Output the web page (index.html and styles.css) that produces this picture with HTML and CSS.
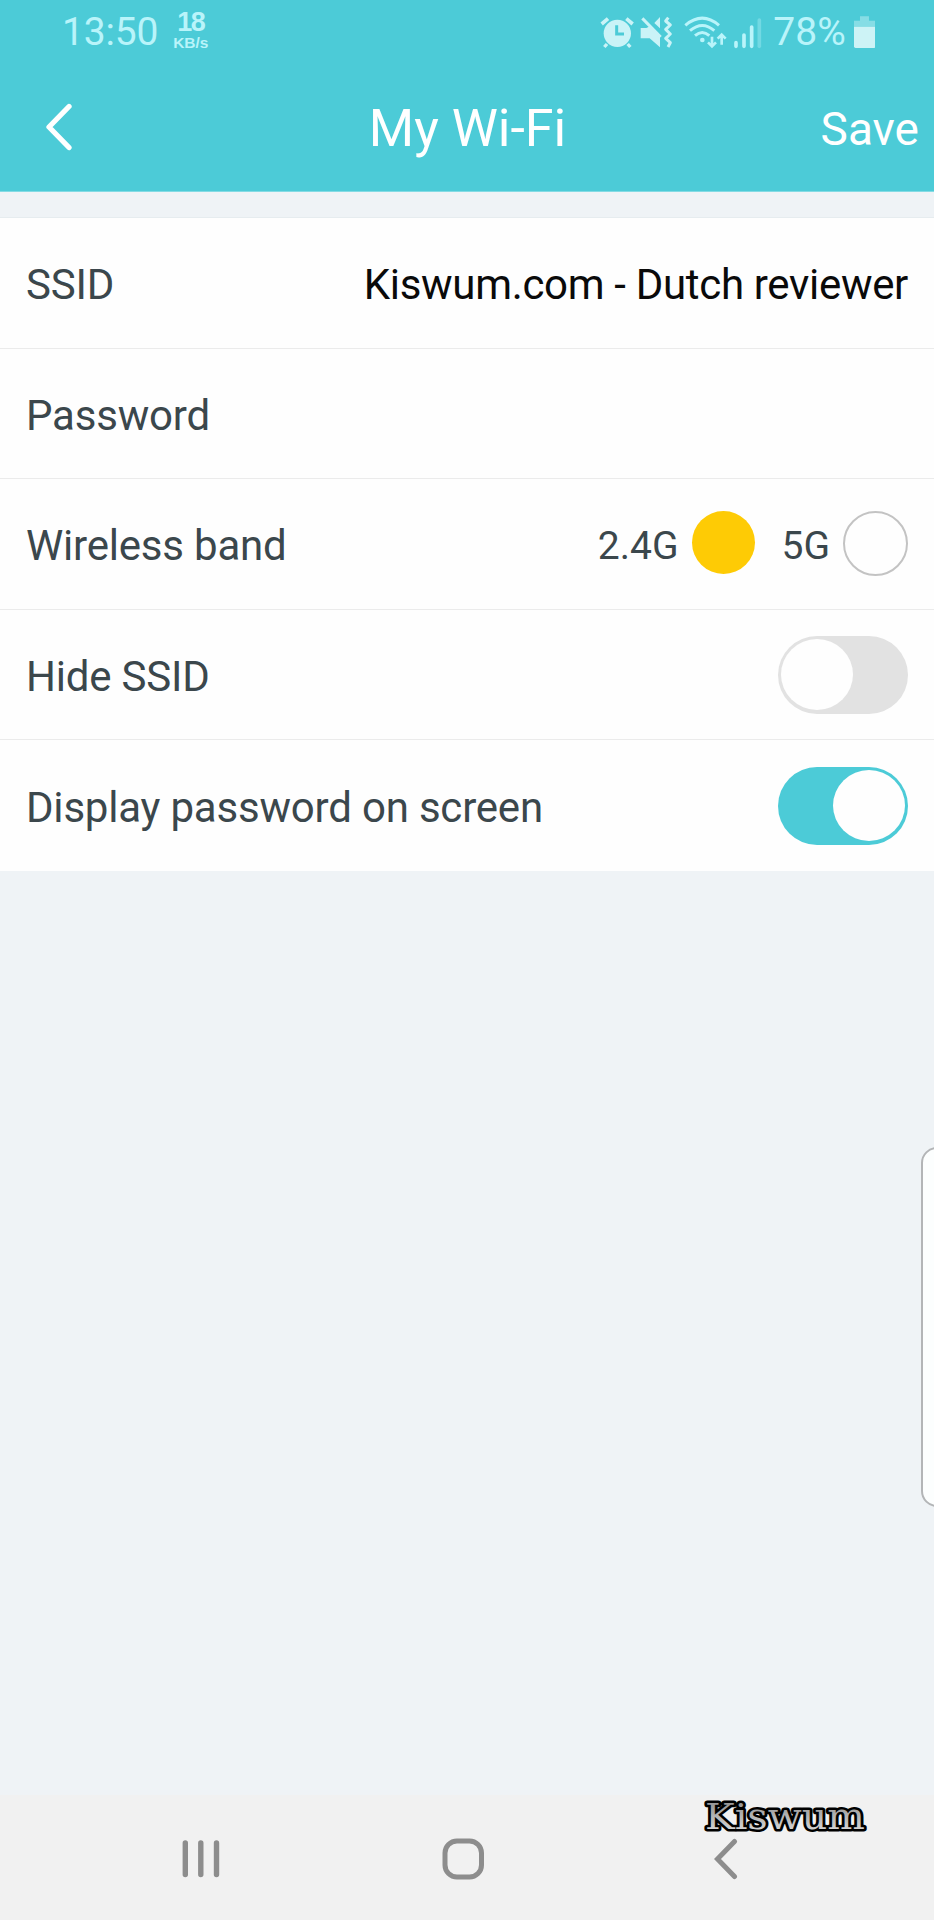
FILE: index.html
```html
<!DOCTYPE html>
<html lang="en">
<head>
<meta charset="utf-8">
<title>My Wi-Fi</title>
<link rel="stylesheet" href="styles.css">
</head>
<body>
<div class="screen">
  <header class="top">
    <div class="status">
      <span class="clock">13:50</span>
      <span class="speed"><span class="speed-num">18</span><span class="speed-unit">KB/s</span></span>
      <span class="spacer"></span>
      <svg class="status-icons" viewBox="50 40 500 105" width="166.67" height="35">
        <g fill="none" stroke="#caf3f7" stroke-width="9">
          <path d="M58 67L77 51M132 51L151 67" stroke-width="11"/>
          <path d="M74 127L66 136M136 127L144 136" stroke-width="10"/>
          <path d="M258 48L250 58L264 70L250 83L264 97L250 110L264 123L257 136" stroke-width="9" stroke-linejoin="round"/>
        </g>
        <circle cx="105" cy="95" r="41" fill="#caf3f7"/>
        <path d="M103 71V97H125" fill="none" stroke="#4ccbd7" stroke-width="9"/>
        <path d="M175 79H192L203 74L233 105V137L202 110H175Z" fill="#caf3f7"/>
        <path d="M216 64L233 46V80Z" fill="#caf3f7"/>
        <path d="M180 50L235 106" stroke="#caf3f7" stroke-width="9"/>
        <g fill="none" stroke="#b9f4fa" stroke-width="9">
          <path d="M309 71Q360 28 410 71"/>
          <path d="M323 87Q360 56 396 87"/>
          <path d="M338 102Q360 83 381 102"/>
        </g>
        <circle cx="360" cy="115" r="7" fill="#b9f4fa"/>
        <g fill="none" stroke="#b9f4fa" stroke-width="8">
          <path d="M389 105V134M377 122L389 134L401 122"/>
          <path d="M418 129V98M406 111L418 99L430 111"/>
        </g>
        <g stroke="#b9f4fa" stroke-width="11" stroke-linecap="round">
          <path d="M461 123V134M485 100V134M508 76V134"/>
          <path d="M531 55V134" opacity=".35"/>
        </g>
      </svg>
      <span class="percent">78%</span>
      <svg class="battery" viewBox="815 44 64 96" width="21.3" height="32">
        <path d="M833 45H860V58H879V76H815V58H833Z" fill="#86dde5"/>
        <path d="M815 76H879V135Q879 140 874 140H820Q815 140 815 135Z" fill="#cdf3f6"/>
      </svg>
    </div>
    <div class="titlebar">
      <svg class="back" viewBox="0 0 28 48" width="28" height="48"><path d="M24 3.500L4 24L24 44.500" fill="none" stroke="#fff" stroke-width="5.300" stroke-linecap="round" stroke-linejoin="round"/></svg>
      <h1 class="title">My Wi-Fi</h1>
      <span class="save">Save</span>
    </div>
  </header>
  <main class="settings">
    <div class="row"><span class="label">SSID</span><span class="value">Kiswum.com - Dutch reviewer</span></div>
    <div class="row"><span class="label">Password</span></div>
    <div class="row">
      <span class="label">Wireless band</span>
      <span class="bands">
        <span class="band">2.4G</span><span class="radio radio-on"></span>
        <span class="band band-5">5G</span><span class="radio"></span>
      </span>
    </div>
    <div class="row"><span class="label">Hide SSID</span><span class="toggle"><span class="knob"></span></span></div>
    <div class="row"><span class="label">Display password on screen</span><span class="toggle toggle-on"><span class="knob"></span></span></div>
  </main>
  <div class="edge-panel"></div>
  <nav class="nav">
    <svg viewBox="0 0 40 44" width="40" height="44"><path d="M5.800 5V36.500M21.300 5V36.500M37 5V36.500" transform="translate(-1.500 1)" stroke="#8d8d8d" stroke-width="5.400" stroke-linecap="round"/></svg>
    <svg class="home" viewBox="0 0 44 44" width="44" height="44"><rect x="4" y="4" width="36.500" height="36" rx="12" fill="none" stroke="#8d8d8d" stroke-width="5"/></svg>
    <svg viewBox="0 0 24 44" width="24" height="44"><path d="M20.500 4.500L3.500 22L20.500 39.500" fill="none" stroke="#8d8d8d" stroke-width="5" stroke-linecap="round"/></svg>
  </nav>
  <svg class="watermark" viewBox="0 0 170 44" width="170" height="44">
    <defs><linearGradient id="silver" x1="0" y1="0" x2="0" y2="1"><stop offset=".2" stop-color="#999"/><stop offset=".8" stop-color="#d2d2d2"/></linearGradient></defs>
    <text class="watermark-text" x="5" y="33" textLength="160" lengthAdjust="spacingAndGlyphs">Kiswum</text>
  </svg>
</div>
</body>
</html>
```

FILE: styles.css
```css
* { box-sizing: border-box; }
body { margin: 0; font-family: Roboto, sans-serif; background: #eff3f6; }
svg { display: block; flex: none; }
.screen {
  position: relative;
  width: 934px;
  height: 1920px;
  overflow: hidden;
  display: flex;
  flex-direction: column;
  background: #eff3f6;
}
.top { height: 192px; background: #4ccbd7; border-bottom: 1px solid #84dbe4; }
.status { height: 64px; display: flex; align-items: center; padding: 0 59px 0 62px; color: #b9f4fa; }
.clock { font-size: 39px; line-height: 64px; letter-spacing: -0.2px; }
.speed {
  display: flex;
  flex-direction: column;
  align-items: center;
  margin-left: 15px;
  font-family: "Liberation Sans", Arial, sans-serif;
  font-weight: bold;
}
.speed-num { font-size: 27px; line-height: 21px; letter-spacing: -1.5px; }
.speed-unit { font-size: 15.5px; line-height: 19px; }
.spacer { flex: 1; }
.percent { font-size: 39px; line-height: 64px; margin: 0 8px 0 8px; }
.titlebar {
  height: 125px;
  display: grid;
  grid-template-columns: 200px 1fr 200px;
  align-items: center;
  padding: 0 15px 0 45px;
  color: #fff;
}
.title { margin: 0 0 0 -29px; padding-top: 4px; text-align: center; font-size: 52px; font-weight: 400; }
.save { padding-top: 4px; text-align: right; font-size: 46px; }
.settings {
  height: 654px;
  margin-top: 25px;
  border-top: 1px solid #e6ecef;
  background: #fefefe;
  display: grid;
  grid-template-rows: repeat(5, 1fr);
}
.row {
  display: flex;
  align-items: center;
  justify-content: space-between;
  padding: 0 26px;
  border-bottom: 1px solid #ebebeb;
  color: #3b474c;
  font-size: 42px;
}
.row:last-child { border-bottom: 0; }
.label, .value { padding-top: 4px; white-space: nowrap; }
.label { letter-spacing: -0.2px; }
.value { color: #0a0a0a; letter-spacing: -0.32px; }
.bands { display: flex; align-items: center; }
.band { font-size: 39px; padding-top: 4px; margin-right: 13px; }
.band-5 { margin-left: 27px; }
.radio { width: 65px; height: 65px; border-radius: 50%; border: 2px solid #c3c3c3; }
.radio-on { width: 63px; height: 63px; margin-bottom: 3px; border: 0; background: #fecb05; }
.toggle {
  width: 130px;
  height: 78px;
  border-radius: 39px;
  padding: 3px;
  display: flex;
  align-items: center;
  background: #e2e2e2;
}
.knob { width: 72px; height: 71px; border-radius: 50%; background: #fefefe; }
.toggle-on { background: #4ccbd7; justify-content: flex-end; }
.edge-panel {
  position: absolute;
  left: 921px;
  top: 1147px;
  width: 40px;
  height: 360px;
  border: 2px solid #b3b5b7;
  border-radius: 16px;
  background: #fcfefe;
}
.nav {
  height: 125px;
  margin-top: auto;
  padding: 3px 196px 0 181px;
  display: flex;
  align-items: center;
  justify-content: space-between;
  background: #f1f1f1;
}
.home { margin-right: 10px; }
.watermark { position: absolute; left: 700px; top: 1796px; }
.watermark-text {
  font-family: "DejaVu Serif", serif;
  font-size: 35px;
  fill: url(#silver);
  stroke: #000;
  stroke-width: 5px;
  stroke-linejoin: round;
  paint-order: stroke;
}
```
